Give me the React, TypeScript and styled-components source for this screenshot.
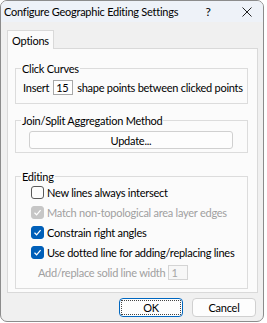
import React from 'react'
import styled, { createGlobalStyle } from 'styled-components'

const GlobalStyle = createGlobalStyle`
  html, body {
    margin: 0;
    padding: 0;
    background: #ffffff;
  }
  body {
    font-family: Lato, "Noto Sans", sans-serif;
    font-size: 11px;
    letter-spacing: -0.25px;
    color: #000;
  }
`

const Window = styled.div`
  width: 264px;
  height: 322px;
  box-sizing: border-box;
  border: 1px solid #8c8c8c;
  border-radius: 7px;
  background: #f0f0f0;
  display: flex;
  flex-direction: column;
  overflow: hidden;
`

const TitleBar = styled.div`
  height: 21px;
  background: #eef2f8;
  display: flex;
  align-items: center;
  padding: 0 0 0 3px;
  flex-shrink: 0;
`

const Title = styled.div`
  flex: 1;
  white-space: nowrap;
  font-size: 11px;
`

const TitleButton = styled.div<{ $w: number }>`
  width: ${p => p.$w}px;
  display: flex;
  justify-content: center;
  align-items: center;
  font-size: 12px;
`

const Body = styled.div`
  flex: 1;
  display: flex;
  flex-direction: column;
  padding: 8px 5px 0 6px;
`

const TabStrip = styled.div`
  display: flex;
  height: 18px;
`

const Tab = styled.div`
  width: 47px;
  box-sizing: border-box;
  background: #fbfbfb;
  border: 1px solid #d9d9d9;
  border-bottom: none;
  display: flex;
  align-items: center;
  justify-content: center;
  position: relative;
  z-index: 1;
  height: 19px;
`

const Panel = styled.div`
  height: 245px;
  box-sizing: border-box;
  background: #fbfbfb;
  border: 1px solid #d9d9d9;
  padding: 12px 9px 0 7px;
  display: flex;
  flex-direction: column;
`

const Group = styled.fieldset<{ $mt: number }>`
  margin: ${p => p.$mt}px 0 0 0;
  padding: 0;
  border: 1px solid #dcdcdc;
  min-width: 0;
`

const Legend = styled.legend`
  margin-left: 5px;
  padding: 0 1px;
  line-height: 15px;
`

const InsertRow = styled.div`
  display: flex;
  align-items: center;
  gap: 4px;
  padding: 4px 0 8px 7px;
  white-space: nowrap;
`

const NumBox = styled.div<{ $disabled?: boolean }>`
  width: 20px;
  height: 15px;
  box-sizing: border-box;
  border: 1px solid ${p => (p.$disabled ? '#d4d4d4' : '#a8a8a8')};
  background: ${p => (p.$disabled ? '#f7f7f7' : '#ffffff')};
  color: ${p => (p.$disabled ? '#a6a6a6' : '#000')};
  padding-left: 2px;
  line-height: 13px;
`

const UpdateButton = styled.div`
  margin: 3px 14px 3px 13px;
  height: 18px;
  box-sizing: border-box;
  border: 1px solid #d0d0d0;
  border-radius: 3px;
  background: #fdfdfd;
  display: flex;
  align-items: center;
  justify-content: center;
`

const CheckList = styled.div`
  display: flex;
  flex-direction: column;
  gap: 4px;
  padding: 0 0 8px 15px;
`

const CheckRow = styled.div<{ $disabled?: boolean; $indent?: number }>`
  display: flex;
  align-items: center;
  height: 16px;
  gap: 3px;
  padding-left: ${p => p.$indent ?? 0}px;
  color: ${p => (p.$disabled ? '#a0a0a0' : '#000')};
  white-space: nowrap;
`

const Box = styled.div<{ $checked?: boolean; $disabled?: boolean }>`
  width: 13px;
  height: 13px;
  box-sizing: border-box;
  border-radius: 3px;
  border: 1px solid
    ${p => (p.$disabled ? '#c6c6c6' : p.$checked ? '#005fb8' : '#5a5a5a')};
  background: ${p => (p.$disabled ? '#c6c6c6' : p.$checked ? '#005fb8' : '#fdfdfd')};
  display: flex;
  align-items: center;
  justify-content: center;
  flex-shrink: 0;
`

const ButtonRow = styled.div`
  display: flex;
  justify-content: flex-end;
  gap: 9px;
  padding: 5px 2px 0 0;
`

const DialogButton = styled.div<{ $default?: boolean }>`
  width: 64px;
  height: 19px;
  box-sizing: border-box;
  border-radius: 4px;
  border: 1px solid ${p => (p.$default ? '#0067c0' : '#d0d0d0')};
  background: #fdfdfd;
  display: flex;
  align-items: center;
  justify-content: center;
  padding: 1px;
`

const FocusRect = styled.div`
  flex: 1;
  align-self: stretch;
  border: 1px dotted #444;
  display: flex;
  align-items: center;
  justify-content: center;
`

const Check = () => (
  <svg width="9" height="9" viewBox="0 0 9 9">
    <path d="M1.5 4.8 L3.6 6.8 L7.6 2.2" fill="none" stroke="#fff" strokeWidth="1.2" />
  </svg>
)

const Checkbox = ({ checked, disabled }: { checked?: boolean; disabled?: boolean }) => (
  <Box $checked={checked} $disabled={disabled}>
    {checked && <Check />}
  </Box>
)

const App = () => {
  return (
    <>
      <GlobalStyle />
      <Window>
        <TitleBar>
          <Title>Configure Geographic Editing Settings</Title>
          <TitleButton $w={46}>?</TitleButton>
          <TitleButton $w={32}>
            <svg width="10" height="10" viewBox="0 0 10 10">
              <path d="M0.5 0.5 L9.5 9.5 M9.5 0.5 L0.5 9.5" stroke="#222" strokeWidth="1" />
            </svg>
          </TitleButton>
        </TitleBar>
        <Body>
          <TabStrip>
            <Tab>Options</Tab>
          </TabStrip>
          <Panel>
            <Group $mt={0}>
              <Legend>Click Curves</Legend>
              <InsertRow>
                <span>Insert</span>
                <NumBox>15</NumBox>
                <span>shape points between clicked points</span>
              </InsertRow>
            </Group>
            <Group $mt={9}>
              <Legend>Join/Split Aggregation Method</Legend>
              <UpdateButton>Update...</UpdateButton>
            </Group>
            <Group $mt={16}>
              <Legend>Editing</Legend>
              <CheckList>
                <CheckRow>
                  <Checkbox />
                  <span>New lines always intersect</span>
                </CheckRow>
                <CheckRow $disabled>
                  <Checkbox checked disabled />
                  <span>Match non-topological area layer edges</span>
                </CheckRow>
                <CheckRow>
                  <Checkbox checked />
                  <span>Constrain right angles</span>
                </CheckRow>
                <CheckRow>
                  <Checkbox checked />
                  <span>Use dotted line for adding/replacing lines</span>
                </CheckRow>
                <CheckRow $disabled $indent={7}>
                  <span>Add/replace solid line width</span>
                  <NumBox $disabled>1</NumBox>
                </CheckRow>
              </CheckList>
            </Group>
          </Panel>
          <ButtonRow>
            <DialogButton $default>
              <FocusRect>OK</FocusRect>
            </DialogButton>
            <DialogButton>Cancel</DialogButton>
          </ButtonRow>
        </Body>
      </Window>
    </>
  )
}

export default App
